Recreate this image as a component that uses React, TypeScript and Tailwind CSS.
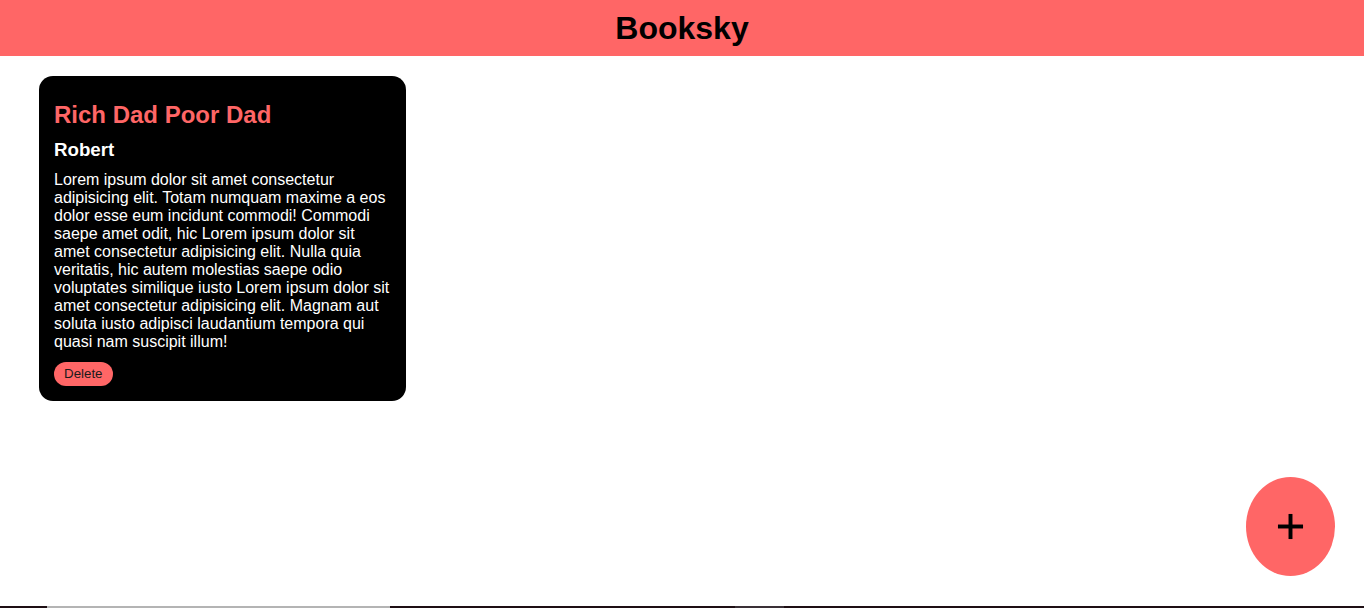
import { Plus } from 'lucide-react'

const books = [
  {
    id: 1,
    title: 'Rich Dad Poor Dad',
    author: 'Robert',
    description:
      'Lorem ipsum dolor sit amet consectetur adipisicing elit. Totam numquam maxime a eos dolor esse eum incidunt commodi! Commodi saepe amet odit, hic Lorem ipsum dolor sit amet consectetur adipisicing elit. Nulla quia veritatis, hic autem molestias saepe odio voluptates similique iusto Lorem ipsum dolor sit amet consectetur adipisicing elit. Magnam aut soluta iusto adipisci laudantium tempora qui quasi nam suscipit illum!',
  },
]

export default function App() {
  return (
    <div className="flex min-h-screen flex-col bg-white font-['Liberation_Sans',Arial,sans-serif] text-black">
      <header className="flex h-[56px] items-center justify-center bg-[#ff6666]">
        <h1 className="text-[32px] leading-[37px] font-bold">Booksky</h1>
      </header>

      <main className="flex flex-1 flex-wrap items-start gap-5 px-[39px] pt-5">
        {books.map((book) => (
          <div
            key={book.id}
            className="w-[367px] rounded-[14px] bg-black px-[15px] pt-[25px] pb-[15px]"
          >
            <h2 className="text-[24px] leading-[28px] font-bold text-[#ff6666]">
              {book.title}
            </h2>
            <h3 className="mt-[10px] text-[18.72px] leading-[22px] font-bold text-white">
              {book.author}
            </h3>
            <p className="mt-[10px] text-[16px] leading-[18px] text-white">
              {book.description}
            </p>
            <button className="mt-[11px] h-6 rounded-full bg-[#ff6666] px-[10px] text-[13.33px] text-[#1a1a1a]">
              Delete
            </button>
          </div>
        ))}
      </main>

      <button
        aria-label="Add book"
        className="fixed right-[29px] bottom-[32px] flex h-[99px] w-[89px] items-center justify-center rounded-[50%] bg-[#ff6666] text-black"
      >
        <Plus size={43} strokeWidth={2.2} strokeLinecap="butt" />
      </button>

      {/* strip along the bottom edge of the shot */}
      <div className="flex h-[2px] bg-[#1e0f14]">
        <div className="w-[47px]" />
        <div className="w-[343px] bg-[#b4b4b4]" />
        <div className="w-[345px]" />
        <div className="w-[49px] bg-[#3a3036]" />
      </div>
    </div>
  )
}
